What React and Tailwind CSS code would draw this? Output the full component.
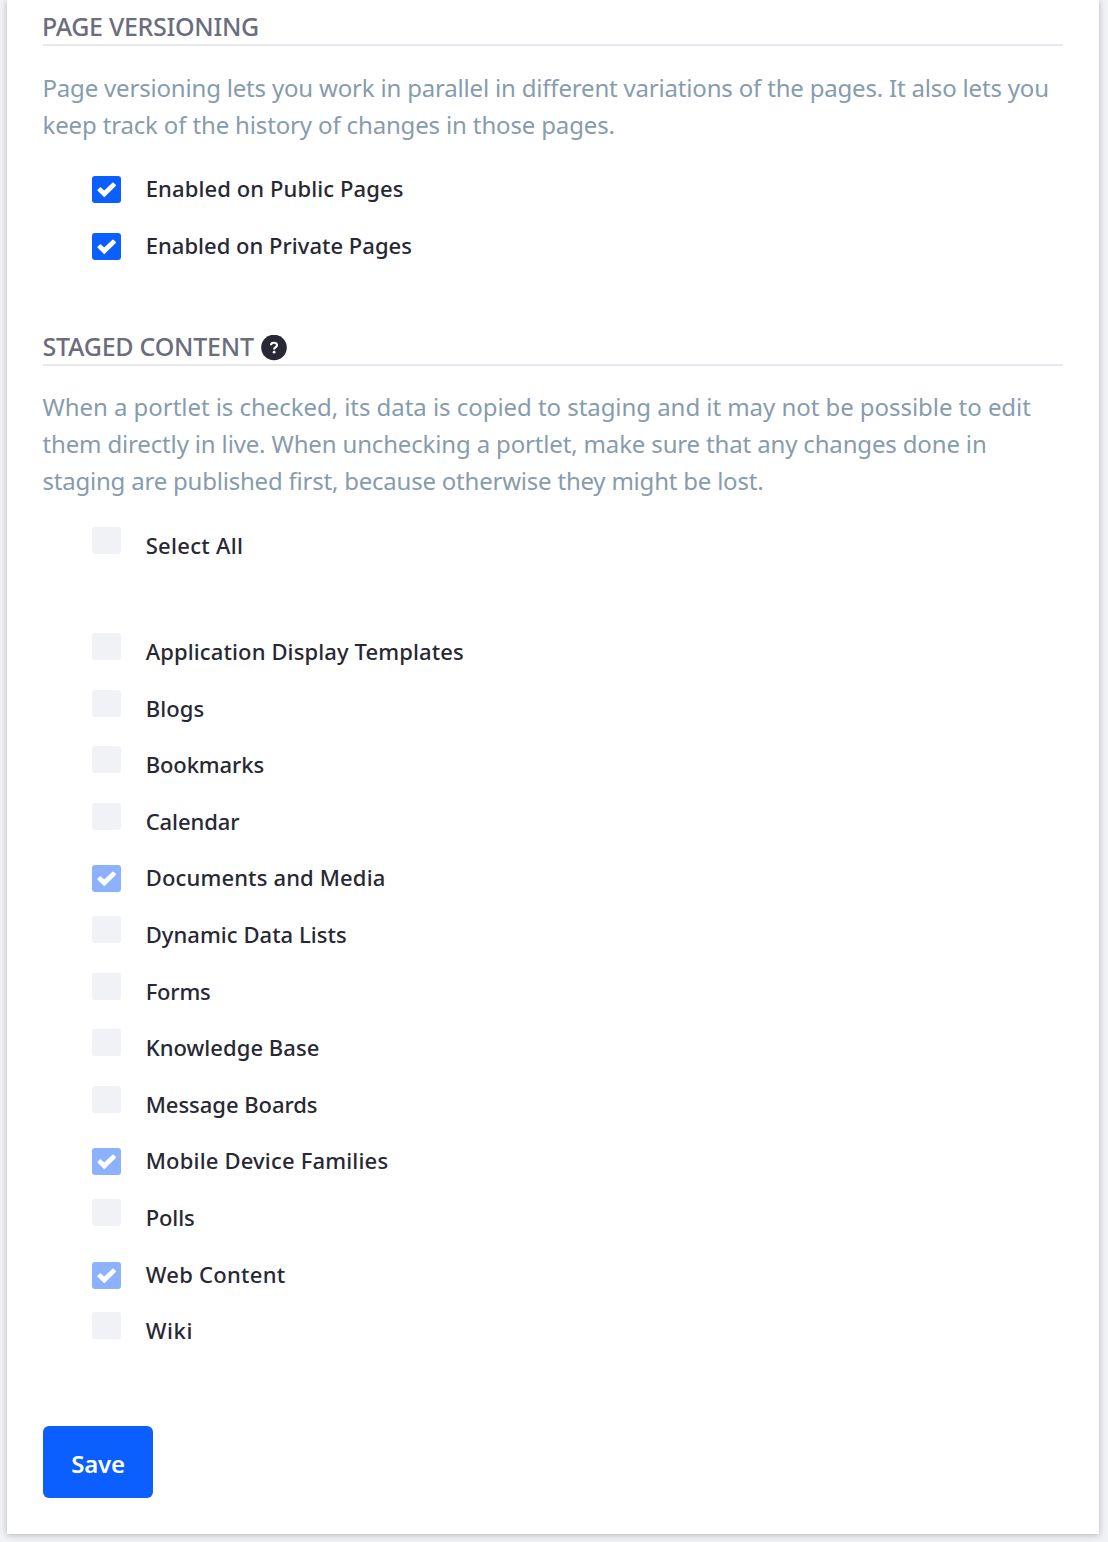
const versioning = [
  { label: "Enabled on Public Pages", tracking: "tracking-[0.11px]" },
  { label: "Enabled on Private Pages", tracking: "tracking-[0.02px]" },
];

const portlets = [
  { label: "Application Display Templates", tracking: "tracking-[0.12px]" },
  { label: "Blogs", tracking: "tracking-[0.1px]" },
  { label: "Bookmarks", tracking: "tracking-[-0.1px]" },
  { label: "Calendar", tracking: "tracking-[-0.08px]" },
  { label: "Documents and Media", tracking: "tracking-[0.15px]", checked: true },
  { label: "Dynamic Data Lists", tracking: "tracking-[0.04px]" },
  { label: "Forms", tracking: "tracking-[-0.2px]" },
  { label: "Knowledge Base", tracking: "tracking-[0.05px]" },
  { label: "Message Boards", tracking: "tracking-[-0.04px]" },
  { label: "Mobile Device Families", tracking: "tracking-[0.18px]", checked: true },
  { label: "Polls", tracking: "tracking-[-0.1px]" },
  { label: "Web Content", tracking: "tracking-[0.28px]", checked: true },
  { label: "Wiki", tracking: "tracking-[0.6px]" },
];

function Row({ label, tracking, checked, disabled }) {
  const boxColor = !checked ? "bg-[#f1f2f5] mt-[9px]" : disabled ? "bg-[#8cb2ff] mt-[15px]" : "bg-[#0b5fff] mt-[15px]";
  return (
    <label className="flex h-[56.6px] pl-[49px]">
      <span className={`flex h-[27px] w-[29px] shrink-0 rounded-[3px] ${boxColor}`}>
        {checked && (
          <svg viewBox="0 0 29 27" className="h-[27px] w-[29px]" fill="white" stroke="white" strokeWidth="1.6" strokeLinejoin="round">
            <path d="M6.2 14.2 L8.4 12.1 L12.2 15.5 L21 7.4 L23.2 9.4 L12.3 20.3 Z" />
          </svg>
        )}
      </span>
      <span className={`ml-[24.7px] mt-[11px] h-8 whitespace-nowrap text-[22px] font-medium leading-8 text-[#272833] ${tracking}`}>
        {label}
      </span>
    </label>
  );
}

function Heading({ children, tracking }) {
  return (
    <h3 className={`flex h-[38px] items-start border-b-2 border-[#e7e7ed] text-[25px] font-medium leading-[36px] text-[#6b6c7e] ${tracking}`}>
      {children}
    </h3>
  );
}

function Paragraph({ lines }) {
  return (
    <p className="-ml-[0.5px] text-[24px] leading-[37px] text-[#869cad]">
      {lines.map(([text, tracking]) => (
        <span key={text} className={`block whitespace-nowrap ${tracking}`}>{text}</span>
      ))}
    </p>
  );
}

export default function App() {
  return (
    <div className="h-[1542px] overflow-hidden bg-[#f1f2f5] pl-[7px] pr-[9px] font-['Noto_Sans',sans-serif]">
      <main className="flex h-[1534px] flex-col bg-white px-9 pt-2 shadow-[0_1px_6px_0px_rgba(39,40,51,0.3)]">
        <Heading tracking="tracking-[-0.31px]">
          <span className="-ml-px">PAGE VERSIONING</span>
        </Heading>
        <div className="mt-[23px]">
          <Paragraph
            lines={[
              ["Page versioning lets you work in parallel in different variations of the pages. It also lets you", "tracking-[-0.185px]"],
              ["keep track of the history of changes in those pages.", "tracking-[-0.15px]"],
            ]}
          />
        </div>
        <div className="mt-[18px]">
          {versioning.map((item) => <Row key={item.label} {...item} checked />)}
        </div>
        <div className="mt-[53.8px]">
          <Heading tracking="tracking-[-0.24px]">
            <span className="-ml-[0.5px]">STAGED CONTENT</span>
            <svg viewBox="0 0 26 26" className="ml-[7px] mt-[7px] size-[26px]">
              <circle cx="13" cy="12.5" r="12.8" fill="#272833" />
              <path d="M9.9 10.2C10 8.5 11.2 7.7 12.9 7.7C14.8 7.7 16 8.7 16 10.2C16 12.2 13.1 12.1 13.1 14.6" fill="none" stroke="white" strokeWidth="2.1" />
              <circle cx="13.1" cy="17.2" r="1.4" fill="white" />
            </svg>
          </Heading>
        </div>
        <div className="mt-[22px]">
          <Paragraph
            lines={[
              ["When a portlet is checked, its data is copied to staging and it may not be possible to edit", "tracking-[-0.05px]"],
              ["them directly in live. When unchecking a portlet, make sure that any changes done in", "tracking-[-0.155px]"],
              ["staging are published first, because otherwise they might be lost.", "tracking-[-0.215px]"],
            ]}
          />
        </div>
        <div className="mt-[19px]">
          <Row label="Select All" tracking="tracking-[0.3px]" />
        </div>
        <div className="mt-[49.4px]">
          {portlets.map((item) => <Row key={item.label} {...item} disabled />)}
        </div>
        <button className="mt-[66.2px] h-[72px] w-[110px] shrink-0 rounded-[6px] bg-[#0b5fff] pt-1 text-[24px] font-semibold leading-8 tracking-[-0.2px] text-white">
          Save
        </button>
      </main>
    </div>
  );
}
